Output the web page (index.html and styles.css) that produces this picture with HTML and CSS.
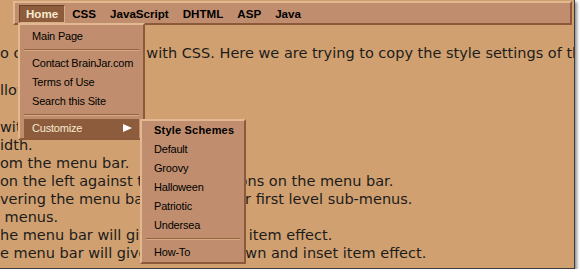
FILE: index.html
```html
<!DOCTYPE html>
<html lang="en">
    <head>
        <meta charset="UTF-8">
        <title>Revenge of the Menu Bar</title>
        <link rel="stylesheet" href="styles.css">
    </head>
    <body>
        <div class="window">
            <div class="menubar">
                <div class="menu-item active">
                    Home
                    <div class="dropdown">
                        <div class="drop-item">Main Page</div>
                        <div class="sep"></div>
                        <div class="drop-item">Contact BrainJar.com</div>
                        <div class="drop-item">Terms of Use</div>
                        <div class="drop-item">Search this Site</div>
                        <div class="sep"></div>
                        <div class="drop-item hl">
                            Customize
                            <span class="arrow"></span>
                            <div class="dropdown sub">
                                <div class="drop-item head">Style Schemes</div>
                                <div class="drop-item">Default</div>
                                <div class="drop-item">Groovy</div>
                                <div class="drop-item">Halloween</div>
                                <div class="drop-item">Patriotic</div>
                                <div class="drop-item">Undersea</div>
                                <div class="sep"></div>
                                <div class="drop-item">How-To</div>
                            </div>
                        </div>
                    </div>
                </div>
                <div class="menu-item">CSS</div>
                <div class="menu-item">JavaScript</div>
                <div class="menu-item">DHTML</div>
                <div class="menu-item">ASP</div>
                <div class="menu-item">Java</div>
            </div>

            <p>o create menu bars with CSS. Here we are trying to copy the style settings of the Windows menus.</p>
            <p>llows the following:</p>
            <div class="list">
                <div>with the menu bar.</div>
                <div>idth.</div>
                <div>om the menu bar.</div>
                <div>on the left against the other buttons on the menu bar.</div>
                <div>vering the menu bar displays their first level sub-menus.</div>
                <div>&nbsp;menus.</div>
                <div>he menu bar will give it an outset item effect.</div>
                <div>e menu bar will give a pressed down and inset item effect.</div>
            </div>
        </div>
    </body>
</html>
```

FILE: styles.css
```css
body {
    margin: 0;
    background-color: #ffffff;
}
.window {
    position: relative;
    width: 574px;
    height: 268px;
    overflow: hidden;
    background-color: #d0a070;
    border-right: 1px solid #3c3c3c;
    border-bottom: 1px solid #3c3c3c;
    box-shadow: 2px 2px 3px rgba(0, 0, 0, 0.45);
    font-family: "DejaVu Sans", sans-serif;
    font-size: 14.5px;
    line-height: 18px;
    color: #1c1c1c;
    white-space: nowrap;
}
p {
    margin: 19px 0;
}

/* menu bar */
.menubar {
    display: flex;
    margin: 1px 2px 0 13px;
    padding: 2px 4px 0 4px;
    height: 18px;
    background-color: #c08e6e;
    border: 2px solid;
    border-color: #e2b890 #8c5a3a #8c5a3a #e2b890;
    font-family: "Liberation Sans", Arial, sans-serif;
    font-size: 11.6px;
    font-weight: bold;
    line-height: 16px;
    color: #000;
}
.menu-item {
    position: relative;
    padding: 0 6px;
    border: 1px solid transparent;
}
.menu-item.active {
    background-color: #8c5c3c;
    color: #f8ead0;
    border-color: #6e4428 #d8ae88 #d8ae88 #6e4428;
}

/* drop-down menus */
.dropdown {
    position: absolute;
    top: 17px;
    left: -2px;
    width: 127px;
    box-sizing: border-box;
    padding: 2px 4px 0 4px;
    background-color: #c08e6e;
    border: 2px solid;
    border-color: #e2b890 #8c5a3a #8c5a3a #e2b890;
    font-family: "Liberation Sans", Arial, sans-serif;
    font-size: 11px;
    font-weight: normal;
    line-height: 13px;
    letter-spacing: -0.2px;
    color: #000;
}
.drop-item {
    position: relative;
    padding: 3px 8px;
}
.drop-item.hl {
    background-color: #8c5c3c;
    color: #f8ead0;
}
.drop-item.head {
    font-weight: bold;
    letter-spacing: 0.2px;
}
.sep {
    margin: 3px 0;
    border-top: 1px solid #94623f;
    border-bottom: 1px solid #d6ac86;
}
.arrow {
    position: absolute;
    right: 7px;
    top: 5px;
    width: 0;
    height: 0;
    border-left: 9px solid #ffffff;
    border-top: 4.5px solid transparent;
    border-bottom: 4.5px solid transparent;
}
.dropdown.sub {
    top: 0;
    left: 116px;
    width: 106px;
    padding: 0 4px;
}
.drop-item.hl .sub {
    color: #000;
}
```
